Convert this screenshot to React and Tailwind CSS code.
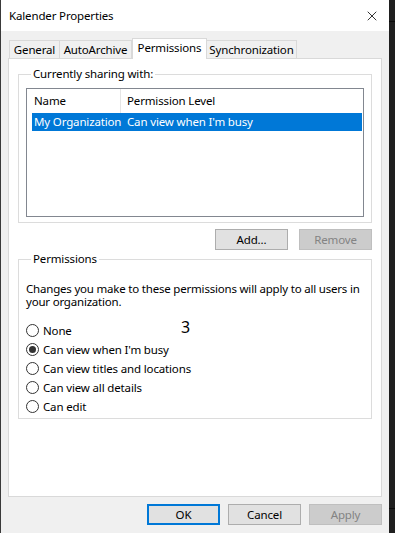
import { X } from "lucide-react";

const font = { fontFamily: '"Segoe UI", "Noto Sans", "Open Sans", sans-serif' };

function Radio({ checked, label }) {
  return (
    <label className="flex items-center h-[19px] gap-[4px]">
      <span className="w-[13px] h-[13px] rounded-full border border-[#333] bg-white flex items-center justify-center">
        {checked && <span className="w-[7px] h-[7px] rounded-full bg-[#333]" />}
      </span>
      <span>{label}</span>
    </label>
  );
}

function Btn({ children, primary, disabled, className = "" }) {
  let cls = "border-[#adadad] bg-[#e1e1e1] text-black";
  if (primary) cls = "border-2 border-[#0078d7] bg-[#e1e1e1] text-black";
  if (disabled) cls = "border-[#bfbfbf] bg-[#cccccc] text-[#838383]";
  return (
    <button className={`h-[21px] w-[73px] border flex items-center justify-center ${cls} ${className}`}>
      {children}
    </button>
  );
}

export default function App() {
  const tabs = [
    { name: "General", w: "w-[51px]" },
    { name: "AutoArchive", w: "w-[73px]" },
    { name: "Permissions", w: "w-[75px]", active: true },
    { name: "Synchronization", w: "w-[91px]" },
  ];

  return (
    <div
      className="w-[395px] h-[533px] flex bg-[#1f1f1f] text-[11.5px] tracking-[-0.15px] text-black overflow-hidden"
      style={font}
    >
      <div className="w-[389px] h-full flex flex-col bg-[#f0f0f0] border-l border-[#3a3a3a]">
        {/* title bar */}
        <div className="h-[31px] bg-white flex items-center justify-between pl-[8px] pr-[9px] shrink-0">
          <span>Kalender Properties</span>
          <X size={16} strokeWidth={1.2} className="text-black" />
        </div>

        {/* tabs */}
        <div className="flex items-end pl-[8px] mt-[7px] h-[20px] relative z-10 whitespace-nowrap">
          {tabs.map((t) =>
            t.active ? (
              <div
                key={t.name}
                className={`${t.w} h-[21px] bg-white border border-b-0 border-[#d9d9d9] -mb-px flex items-center justify-center pb-[2px]`}
              >
                {t.name}
              </div>
            ) : (
              <div
                key={t.name}
                className={`${t.w} h-[18px] bg-[#f0f0f0] border border-b-0 border-[#d9d9d9] -ml-px first:ml-0 flex items-center justify-center`}
              >
                {t.name}
              </div>
            )
          )}
        </div>

        {/* panel */}
        <div className="ml-[7px] w-[374px] h-[439px] bg-white border border-[#d9d9d9] pt-[7px] px-[9px]">
          {/* currently sharing */}
          <fieldset className="border border-[#dcdcdc] h-[157px] px-[7px] pb-[5px]">
            <legend className="ml-[5px] px-[2px] leading-[16px]">Currently sharing with:</legend>
            <div className="mt-[6px] h-[129px] border border-[#828790] bg-white flex flex-col whitespace-nowrap">
              <div className="flex h-[24px] items-center">
                <div className="w-[94px] h-full pl-[7px] flex items-center border-r border-[#e5e5e5]">Name</div>
                <div className="pl-[6px]">Permission Level</div>
              </div>
              <div className="flex h-[18px] items-center bg-[#0078d7] text-white ml-[5px] mr-[1px]">
                <div className="w-[89px] pl-[2px]">My Organization</div>
                <div className="pl-[6px]">Can view when I'm busy</div>
              </div>
            </div>
          </fieldset>

          <div className="flex justify-end gap-[11px] mt-[6px]">
            <Btn>Add...</Btn>
            <Btn disabled>Remove</Btn>
          </div>

          {/* permissions group */}
          <fieldset className="relative border border-[#dcdcdc] h-[168px] mt-[1px] pl-[7px] pr-[2px]">
            <legend className="ml-[5px] px-[2px] leading-[16px]">Permissions</legend>
            <p className="mt-[15px] leading-[13px] tracking-[-0.2px]">
              Changes you make to these permissions will apply to all users in your organization.
            </p>
            <div className="mt-[13px] flex flex-col">
              <Radio label="None" />
              <Radio label="Can view when I'm busy" checked />
              <Radio label="Can view titles and locations" />
              <Radio label="Can view all details" />
              <Radio label="Can edit" />
            </div>
            <span className="absolute left-[162px] top-[52px] text-[16px] leading-none">3</span>
          </fieldset>
        </div>

        {/* footer */}
        <div className="flex justify-end gap-[8px] pr-[7px] mt-[7px]">
          <Btn primary>OK</Btn>
          <Btn>Cancel</Btn>
          <Btn disabled>Apply</Btn>
        </div>
      </div>
      <div className="flex-1 flex flex-col">
        <div className="h-[22px] border-b border-[#0a0a0a]" />
        <div className="h-[487px] border-b border-[#0a0a0a]" />
      </div>
    </div>
  );
}
